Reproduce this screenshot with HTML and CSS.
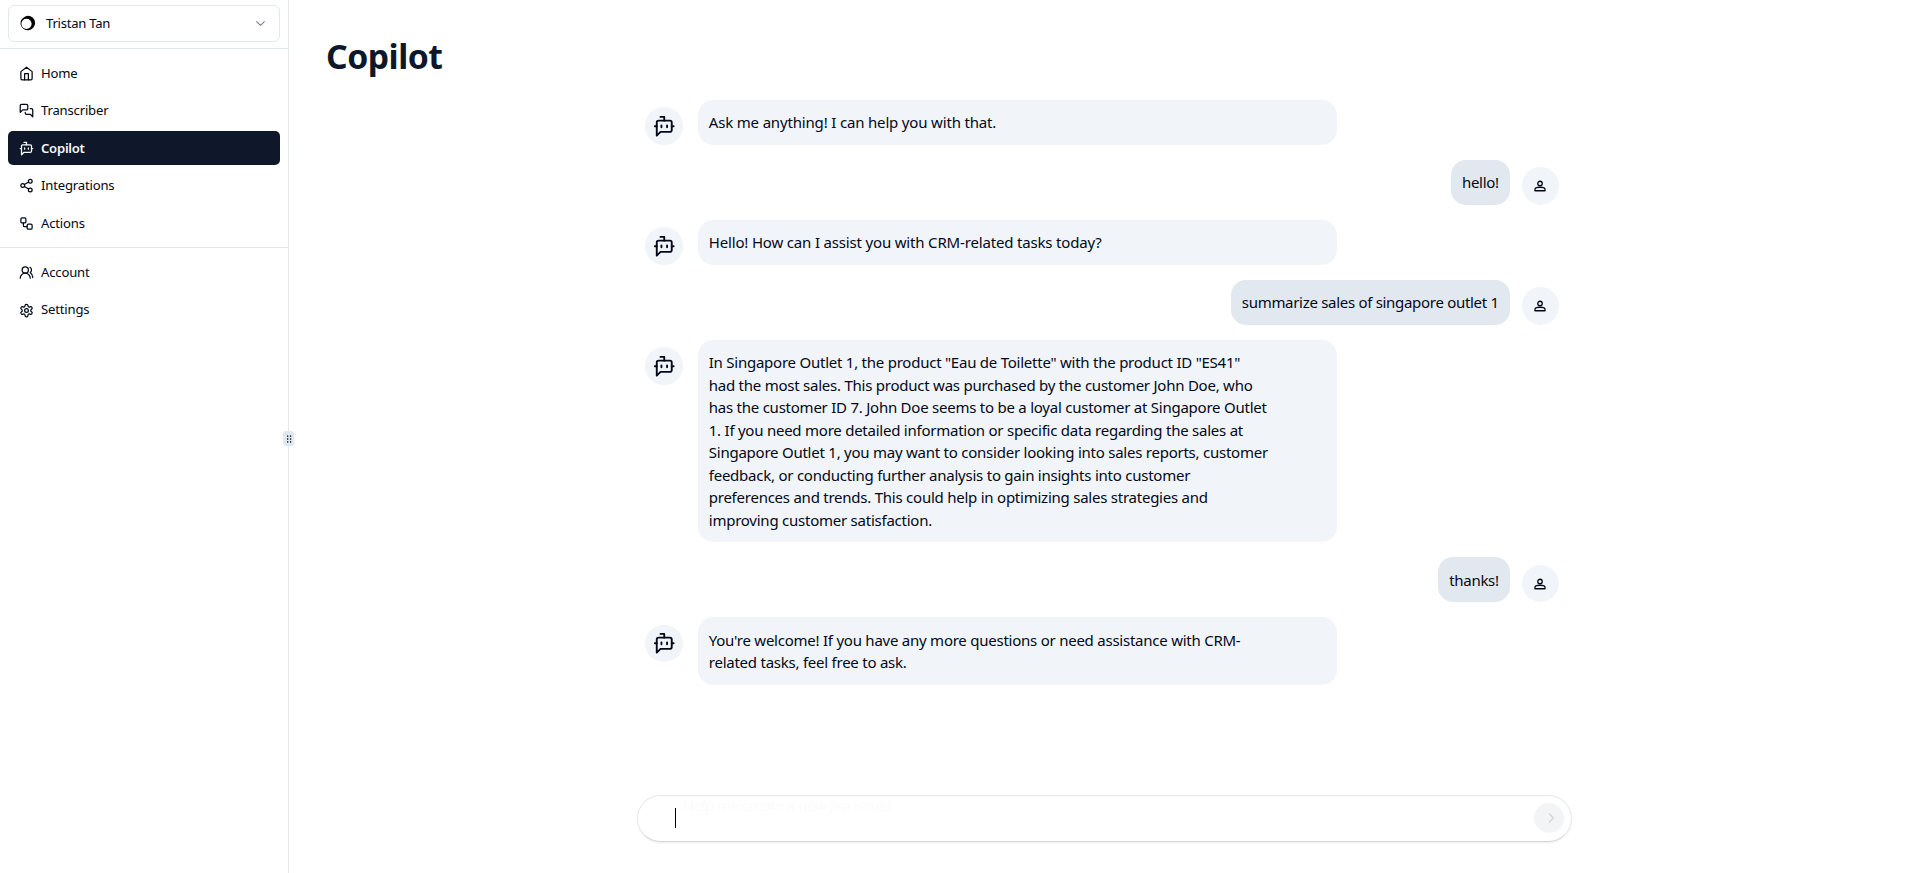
FILE: index.html
```
<!DOCTYPE html>
<html lang="en">
<head>
  <meta charset="UTF-8">
  <meta name="viewport" content="width=device-width, initial-scale=1.0">
  <title>Copilot</title>
  <link rel="stylesheet" href="styles.css">
</head>
<body>

  <!-- shared icons -->
  <svg class="sprite" width="0" height="0">
    <symbol id="bot" viewBox="0 0 24 24">
      <path d="M12 6V2H8"/><path d="m8 18-4 4V8a2 2 0 0 1 2-2h12a2 2 0 0 1 2 2v8a2 2 0 0 1-2 2Z"/><path d="M2 12h2M9 11v2M15 11v2M20 12h2"/>
    </symbol>
    <symbol id="person" viewBox="0 0 24 24">
      <circle cx="12" cy="7" r="4.500"/><path d="M2 21.500v-3c0-2 4-4 10-4s10 2 10 4v3Z"/>
    </symbol>
  </svg>

  <div class="layout">
    <aside class="sidebar">
      <div class="switcher">
        <button class="account-select">
          <svg class="logo" viewBox="0 0 16 16"><path fill-rule="evenodd" d="M8 .7a7.300 7.300 0 1 1-7.300 9A7.300 7.300 0 0 1 4 2.200 7.300 7.300 0 0 1 8 .7ZM6.500 3.700a5.100 5.100 0 1 0 5.100 5.100 5.100 5.100 0 0 0-5.100-5.100Z"/></svg>
          <span>Tristan Tan</span>
          <svg class="icon chevron" viewBox="0 0 24 24"><path d="m5 8.500 7 7 7-7"/></svg>
        </button>
      </div>

      <nav class="nav">
        <a class="nav-item"><svg class="icon" viewBox="0 0 24 24"><path d="m3 9 9-7 9 7v11a2 2 0 0 1-2 2H5a2 2 0 0 1-2-2z"/><path d="M9 22V12h6v10"/></svg><span>Home</span></a>
        <a class="nav-item"><svg class="icon" viewBox="0 0 24 24"><path d="M14 9a2 2 0 0 1-2 2H6l-4 4V4c0-1.100.9-2 2-2h8a2 2 0 0 1 2 2v5Z"/><path d="M18 9h2a2 2 0 0 1 2 2v11l-4-4h-6a2 2 0 0 1-2-2v-1"/></svg><span>Transcriber</span></a>
        <a class="nav-item active"><svg class="icon"><use href="#bot"/></svg><span>Copilot</span></a>
        <a class="nav-item"><svg class="icon" viewBox="0 0 24 24"><circle cx="18" cy="5" r="3"/><circle cx="6" cy="12" r="3"/><circle cx="18" cy="19" r="3"/><path d="m8.590 13.510 6.830 3.980M15.410 6.510l-6.820 3.980"/></svg><span>Integrations</span></a>
        <a class="nav-item"><svg class="icon" viewBox="0 0 24 24"><rect x="3" y="3" width="8" height="8" rx="2"/><path d="M7 11v4a2 2 0 0 0 2 2h4"/><rect x="13" y="13" width="8" height="8" rx="2"/></svg><span>Actions</span></a>
      </nav>

      <nav class="nav nav-bottom">
        <a class="nav-item"><svg class="icon" viewBox="0 0 24 24"><path d="M18 21a8 8 0 0 0-16 0"/><circle cx="10" cy="8" r="5"/><path d="M22 20c0-3.370-2-6.500-4-8a5 5 0 0 0-.450-8.300"/></svg><span>Account</span></a>
        <a class="nav-item"><svg class="icon" viewBox="0 0 24 24"><path d="M12.220 2h-.440a2 2 0 0 0-2 2v.180a2 2 0 0 1-1 1.730l-.430.250a2 2 0 0 1-2 0l-.150-.080a2 2 0 0 0-2.730.730l-.220.380a2 2 0 0 0 .730 2.730l.150.100a2 2 0 0 1 1 1.720v.510a2 2 0 0 1-1 1.740l-.150.090a2 2 0 0 0-.730 2.730l.220.380a2 2 0 0 0 2.730.730l.150-.080a2 2 0 0 1 2 0l.430.250a2 2 0 0 1 1 1.730V20a2 2 0 0 0 2 2h.440a2 2 0 0 0 2-2v-.180a2 2 0 0 1 1-1.730l.430-.250a2 2 0 0 1 2 0l.150.080a2 2 0 0 0 2.730-.730l.220-.390a2 2 0 0 0-.730-2.730l-.150-.080a2 2 0 0 1-1-1.740v-.500a2 2 0 0 1 1-1.740l.150-.090a2 2 0 0 0 .730-2.730l-.220-.380a2 2 0 0 0-2.730-.730l-.150.080a2 2 0 0 1-2 0l-.430-.250a2 2 0 0 1-1-1.730V4a2 2 0 0 0-2-2z"/><circle cx="12" cy="12" r="3"/></svg><span>Settings</span></a>
      </nav>

      <div class="handle">
        <svg viewBox="0 0 24 24"><circle cx="9" cy="5" r="1"/><circle cx="9" cy="12" r="1"/><circle cx="9" cy="19" r="1"/><circle cx="16" cy="5" r="1"/><circle cx="16" cy="12" r="1"/><circle cx="16" cy="19" r="1"/></svg>
      </div>
    </aside>

    <main class="main">
      <h1>Copilot</h1>

      <div class="messages">
        <div class="message">
          <div class="avatar"><svg class="icon"><use href="#bot"/></svg></div>
          <div class="bubble"><p>Ask me anything! I can help you with that.</p></div>
        </div>
        <div class="message user">
          <div class="bubble"><p>hello!</p></div>
          <div class="avatar"><svg class="icon"><use href="#person"/></svg></div>
        </div>
        <div class="message">
          <div class="avatar"><svg class="icon"><use href="#bot"/></svg></div>
          <div class="bubble"><p>Hello! How can I assist you with CRM-related tasks today?</p></div>
        </div>
        <div class="message user">
          <div class="bubble"><p>summarize sales of singapore outlet 1</p></div>
          <div class="avatar"><svg class="icon"><use href="#person"/></svg></div>
        </div>
        <div class="message">
          <div class="avatar"><svg class="icon"><use href="#bot"/></svg></div>
          <div class="bubble long"><p>In Singapore Outlet 1, the product "Eau de Toilette" with the product ID "ES41"<br>had the most sales. This product was purchased by the customer John Doe, who<br>has the customer ID 7. John Doe seems to be a loyal customer at Singapore Outlet<br>1. If you need more detailed information or specific data regarding the sales at<br>Singapore Outlet 1, you may want to consider looking into sales reports, customer<br>feedback, or conducting further analysis to gain insights into customer<br>preferences and trends. This could help in optimizing sales strategies and<br>improving customer satisfaction.</p></div>
        </div>
        <div class="message user">
          <div class="bubble"><p>thanks!</p></div>
          <div class="avatar"><svg class="icon"><use href="#person"/></svg></div>
        </div>
        <div class="message">
          <div class="avatar"><svg class="icon"><use href="#bot"/></svg></div>
          <div class="bubble long"><p>You're welcome! If you have any more questions or need assistance with CRM-<br>related tasks, feel free to ask.</p></div>
        </div>
      </div>

      <form class="prompt">
        <span class="caret"></span>
        <span class="placeholder">Help me create a new Jira issue!</span>
        <button type="button" class="send"><svg class="icon" viewBox="0 0 24 24"><path d="m9 4 8 8-8 8"/></svg></button>
      </form>
    </main>
  </div>

</body>
</html>
```
FILE: styles.css
```
* {
  box-sizing: border-box;
}
html {
  font-size: 15px;
}
body {
  margin: 0;
  font-family: "Noto Sans", "Open Sans", sans-serif;
  line-height: 1.5;
  color: #020817;
  background-color: #fff;
}
h1, p {
  margin: 0;
}
button {
  font: inherit;
  color: inherit;
}
.sprite {
  position: absolute;
}
.icon {
  flex: none;
  width: 1rem;
  height: 1rem;
  fill: none;
  stroke: currentColor;
  stroke-width: 2;
  stroke-linecap: round;
  stroke-linejoin: round;
}
.layout {
  display: flex;
  height: 100vh;
}

/* sidebar */
.sidebar {
  position: relative;
  flex: none;
  width: 289px;
  border-right: 1px solid #e2e8f0;
}
.switcher {
  display: flex;
  align-items: center;
  height: 48.75px;
  padding: 0 8px 1px;
  border-bottom: 1px solid #e2e8f0;
}
.account-select {
  display: flex;
  align-items: center;
  width: 272px;
  height: 37px;
  padding: 0 12px 0 11px;
  border: 1px solid #e2e8f0;
  border-radius: 6px;
  background: #fff;
  font-size: 13.1px;
  letter-spacing: -0.25px;
}
.logo {
  width: 16px;
  height: 16px;
  margin-right: 10px;
}
.chevron {
  margin-left: auto;
  width: 13px;
  stroke: #7b7f88;
}
.nav {
  display: flex;
  flex-direction: column;
  gap: 0.25rem;
  padding: 7.7px 8px 6.8px;
}
.nav-bottom {
  border-top: 1px solid #e2e8f0;
}
.nav-item {
  display: flex;
  align-items: center;
  gap: 7px;
  height: 2.25rem;
  padding: 0 11px;
  border-radius: 5px;
  font-size: 13.1px;
  font-weight: 450;
  letter-spacing: -0.18px;
}
.nav-item span {
  padding-top: 0.5px;
}
.nav-item.active {
  background-color: #0f172a;
  color: #f8fafc;
  font-weight: 600;
  letter-spacing: -0.25px;
}
.handle {
  position: absolute;
  top: 431px;
  right: -6px;
  display: flex;
  align-items: center;
  justify-content: center;
  width: 11px;
  height: 15px;
  border-radius: 3px;
  background-color: #e2e8f0;
}
.handle svg {
  flex: none;
  width: 10px;
  height: 10px;
  stroke: #020817;
  stroke-width: 2;
}

/* chat */
.main {
  display: flex;
  flex-direction: column;
  flex: 1;
  padding: 30px 37px 31px;
}
h1 {
  font-size: 33.75px;
  line-height: 52px;
  font-weight: 700;
  letter-spacing: -0.5px;
  color: #0f172a;
}
.messages {
  display: flex;
  flex-direction: column;
  gap: 15px;
  width: 914px;
  margin: 17.9px 0 0 319px;
}
.message {
  display: flex;
  align-items: flex-start;
  gap: 15px;
}
.message.user {
  justify-content: flex-end;
  gap: 11.5px;
}
.bubble {
  width: 639px;
  padding: 11.25px;
  border-radius: 15px;
  background-color: #f1f5f9;
  letter-spacing: -0.17px;
}
.bubble.long {
  letter-spacing: -0.24px;
}
.user .bubble {
  width: auto;
  background-color: #e2e8f0;
  letter-spacing: -0.3px;
}
.bubble p {
  white-space: nowrap;
}
.avatar {
  display: flex;
  align-items: center;
  justify-content: center;
  flex: none;
  width: 2.5rem;
  height: 2.5rem;
  margin-top: 7.5px;
  border-radius: 50%;
  background-color: #f1f5f9;
}
.avatar .icon {
  width: 22.5px;
  height: 22.5px;
}
.user .avatar .icon {
  width: 12px;
  height: 12px;
  stroke-width: 2.6;
}
.prompt {
  display: flex;
  align-items: center;
  align-self: center;
  width: 935px;
  height: 47px;
  margin-top: auto;
  padding: 0 7px 1px 37px;
  border: 1px solid #e8e8ea;
  border-bottom-color: #d6d6d9;
  border-radius: 24px;
  box-shadow: 0 1px 2px rgba(0, 0, 0, 0.08);
}
.caret {
  width: 1px;
  height: 20px;
  background-color: #000;
}
.placeholder {
  align-self: flex-start;
  margin-left: 7px;
  line-height: 18px;
  letter-spacing: -0.45px;
  color: #fcfcfc;
}
.send {
  display: flex;
  align-items: center;
  justify-content: center;
  width: 30px;
  height: 30px;
  margin-left: auto;
  padding: 0 0 0 3px;
  border: none;
  border-radius: 50%;
  background-color: #f3f4f6;
  color: #d1d5db;
}
.send .icon {
  width: 12px;
  height: 12px;
  stroke-width: 2.5;
}
```
